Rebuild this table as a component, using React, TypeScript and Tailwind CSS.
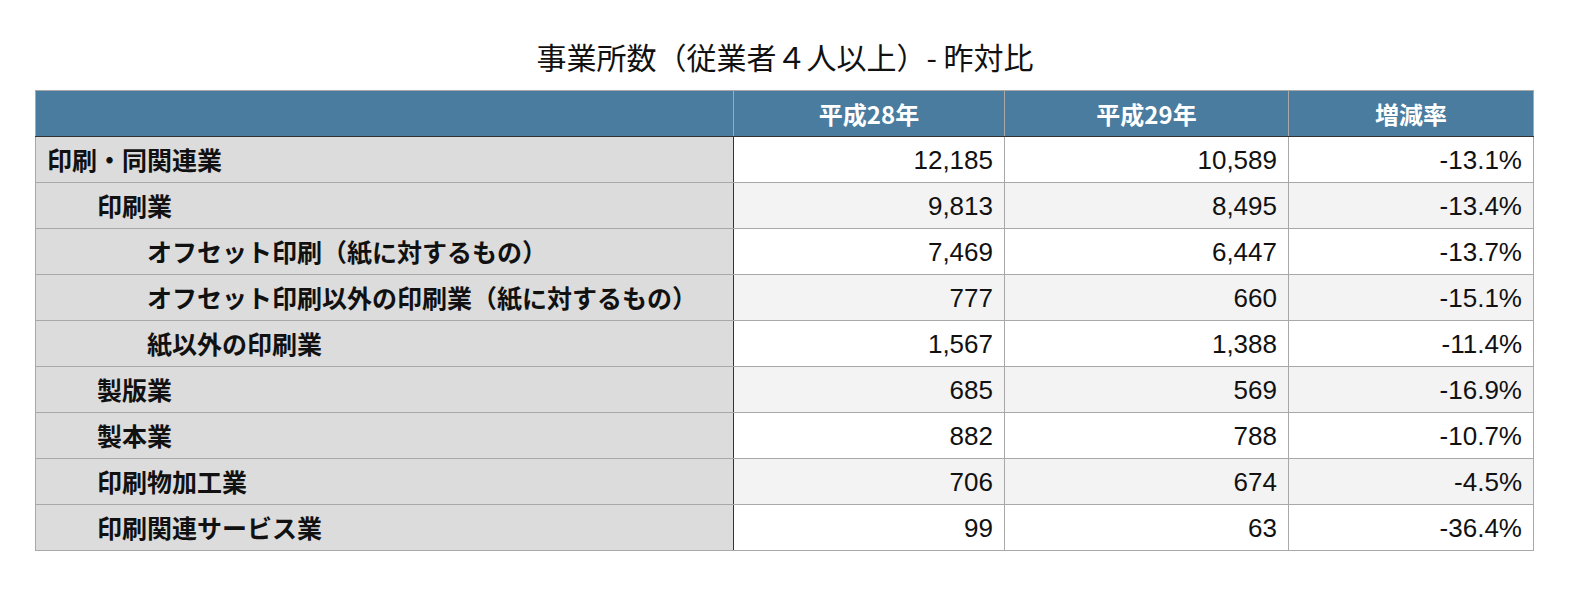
const rows = [
  { label: "印刷・同関連業", level: 0, y28: "12,185", y29: "10,589", rate: "-13.1%" },
  { label: "印刷業", level: 1, y28: "9,813", y29: "8,495", rate: "-13.4%" },
  { label: "オフセット印刷（紙に対するもの）", level: 2, y28: "7,469", y29: "6,447", rate: "-13.7%" },
  { label: "オフセット印刷以外の印刷業（紙に対するもの）", level: 2, y28: "777", y29: "660", rate: "-15.1%" },
  { label: "紙以外の印刷業", level: 2, y28: "1,567", y29: "1,388", rate: "-11.4%" },
  { label: "製版業", level: 1, y28: "685", y29: "569", rate: "-16.9%" },
  { label: "製本業", level: 1, y28: "882", y29: "788", rate: "-10.7%" },
  { label: "印刷物加工業", level: 1, y28: "706", y29: "674", rate: "-4.5%" },
  { label: "印刷関連サービス業", level: 1, y28: "99", y29: "63", rate: "-36.4%" },
];

const indent = ["pl-[11px]", "pl-[61px]", "pl-[111px]"];

const numCell =
  "border border-[#a8a8a8] pr-[11px] text-right font-['Liberation_Sans',sans-serif] text-[26px]";

export default function App() {
  return (
    <div className="min-h-[600px] bg-white px-[35px] pt-[38px] font-['Noto_Sans_CJK_JP',sans-serif] text-[#111]">
      <h1 className="mb-4 text-center text-[30px] leading-[36px] font-normal">
        事業所数（従業者４人以上）- 昨対比
      </h1>
      <table className="w-[1498px] border-collapse border border-[#a8a8a8] table-fixed">
        <colgroup>
          <col className="w-[698px]" />
          <col className="w-[271px]" />
          <col className="w-[284px]" />
          <col className="w-[245px]" />
        </colgroup>
        <thead>
          <tr className="h-[46px] bg-[#497c9f] text-white text-[24px] font-bold">
            <th className="border border-[#a8a8a8] border-b-[#333]"></th>
            <th className="border border-[#a8a8a8] border-b-[#333] text-center">平成28年</th>
            <th className="border border-[#a8a8a8] border-b-[#333] text-center">平成29年</th>
            <th className="border border-[#a8a8a8] border-b-[#333] text-center">増減率</th>
          </tr>
        </thead>
        <tbody className="text-[25px] leading-none">
          {rows.map((r, i) => (
            <tr key={r.label} className={`h-[46px] ${i % 2 === 1 ? "bg-[#f3f3f3]" : "bg-white"}`}>
              <td className={`border border-[#a8a8a8] border-r-[#333] bg-[#dcdcdc] font-bold ${indent[r.level]}`}>
                {r.label}
              </td>
              <td className={numCell}>{r.y28}</td>
              <td className={numCell}>{r.y29}</td>
              <td className={numCell}>{r.rate}</td>
            </tr>
          ))}
        </tbody>
      </table>
    </div>
  );
}
